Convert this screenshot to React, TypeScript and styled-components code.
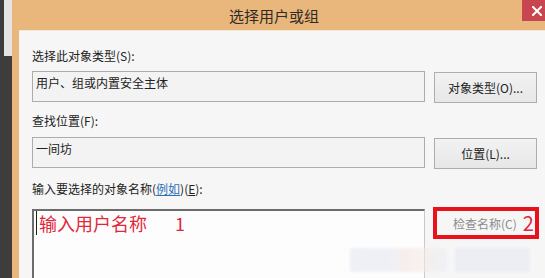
import React from 'react';
import styled, { createGlobalStyle } from 'styled-components';

const GlobalStyle = createGlobalStyle`
  html, body {
    margin: 0;
    padding: 0;
    background: #3d3d3d;
  }
  * {
    box-sizing: border-box;
  }
`;

const FONT = `"Noto Sans CJK SC", "Liberation Sans", sans-serif`;

const Screen = styled.div`
  position: relative;
  width: 545px;
  height: 278px;
  overflow: hidden;
  display: flex;
  font-family: ${FONT};
`;

const Backdrop = styled.div`
  width: 12px;
  flex-shrink: 0;
  background:
    linear-gradient(to right, #3b3b3b 4px, #e4e4e4 4px) top / 100% 56px no-repeat,
    #3d3d3d;
`;

const Window = styled.div`
  flex: 1;
  display: flex;
  flex-direction: column;
  background: #e9b67b;
`;

const TitleBar = styled.div`
  height: 30px;
  display: flex;
  align-items: flex-start;
  flex-shrink: 0;
`;

const Title = styled.div`
  flex: 1;
  text-align: center;
  padding-left: 14px;
  font-size: 15px;
  line-height: 31px;
  color: #2e2a26;
`;

const CloseButton = styled.div`
  width: 25px;
  height: 21px;
  background: #c8464f;
  display: flex;
  align-items: center;
  padding-left: 10px;
`;

const Frame = styled.div`
  flex: 1;
  display: flex;
  padding-left: 7px;
`;

const Panel = styled.div`
  flex: 1;
  display: flex;
  flex-direction: column;
  background: #f6f6f6;
  border-top: 1px solid #f4e6d4;
  padding: 17px 8px 0 13px;
`;

const Label = styled.div<{ $top?: number }>`
  margin-top: ${(p) => p.$top ?? 0}px;
  font-size: 12px;
  line-height: 16px;
  color: #222;
`;

const Link = styled.span`
  color: #2f6fb5;
  text-decoration: underline;
`;

const Row = styled.div<{ $top: number; $side: number; $gap: number }>`
  margin-top: ${(p) => p.$top}px;
  display: grid;
  grid-template-columns: 393px ${(p) => p.$side}px;
  column-gap: ${(p) => p.$gap}px;
  align-items: start;
`;

const Field = styled.div`
  height: 31px;
  border: 1px solid #acacac;
  background: #f3f3f3;
  padding: 3px 3px;
  font-size: 12px;
  line-height: 16px;
  color: #222;
`;

const SideButton = styled.div`
  height: 31px;
  margin-top: 1px;
  border: 1px solid #adadad;
  background: linear-gradient(#f2f2f2, #e7e7e7);
  display: flex;
  align-items: center;
  justify-content: center;
  font-size: 12px;
  color: #222;
`;

const TextArea = styled.div`
  height: 90px;
  border-top: 2px solid #6c6c6c;
  border-left: 2px solid #6c6c6c;
  border-right: 1px solid #c9c9c9;
  background: #fdfdfd;
  padding: 0 2px;
  display: flex;
  align-items: flex-start;
`;

const Caret = styled.span`
  display: inline-block;
  width: 1px;
  height: 24px;
  background: #1e1e1e;
  margin-right: 2px;
`;

const Hint = styled.span<{ $gap?: number }>`
  margin-left: ${(p) => p.$gap ?? 0}px;
  font-size: 18px;
  line-height: 24px;
  color: #e2273a;
`;

const Annotation = styled.div`
  height: 32px;
  margin-top: -2px;
  border: 4px solid #e8121d;
  display: flex;
  align-items: center;
  padding-left: 16px;
  gap: 6px;
`;

const DisabledText = styled.span`
  font-size: 12px;
  color: #8c8c8c;
`;

const Marker = styled.span`
  font-size: 20px;
  line-height: 22px;
  color: #e2273a;
`;

const Ghost = styled.div`
  position: absolute;
  left: 350px;
  top: 248px;
  display: flex;
  gap: 8px;
  filter: blur(1.5px);
  opacity: 0.6;
`;

const GhostBlock = styled.div<{ $w: number; $tint?: boolean }>`
  width: ${(p) => p.$w}px;
  height: 24px;
  background: ${(p) =>
    p.$tint
      ? 'linear-gradient(to right, #e4e8f2 0%, #e6e9f3 40%, #f4e4e2 55%, #f6e9e4 70%, #eceef5 100%)'
      : '#e6e9f2'};
`;

const CloseIcon = () => (
  <svg width="10" height="10" viewBox="0 0 10 10">
    <path d="M1 1 L9 9 M9 1 L1 9" stroke="#fff" strokeWidth="2" strokeLinecap="square" />
  </svg>
);

const App: React.FC = () => {
  return (
    <Screen>
      <GlobalStyle />
      <Backdrop />
      <Window>
        <TitleBar>
          <Title>选择用户或组</Title>
          <CloseButton>
            <CloseIcon />
          </CloseButton>
        </TitleBar>
        <Frame>
          <Panel>
            <Label>选择此对象类型(S):</Label>
            <Row $top={7} $side={103} $gap={9}>
              <Field>用户、组或内置安全主体</Field>
              <SideButton>对象类型(O)...</SideButton>
            </Row>
            <Label $top={10}>查找位置(F):</Label>
            <Row $top={8} $side={103} $gap={9}>
              <Field>一间坊</Field>
              <SideButton>位置(L)...</SideButton>
            </Row>
            <Label $top={12}>
              输入要选择的对象名称(<Link>例如</Link>)(<u>E</u>):
            </Label>
            <Row $top={12} $side={106} $gap={8}>
              <TextArea>
                <Caret />
                <Hint>输入用户名称</Hint>
                <Hint $gap={28}>1</Hint>
              </TextArea>
              <Annotation>
                <DisabledText>检查名称(C)</DisabledText>
                <Marker>2</Marker>
              </Annotation>
            </Row>
          </Panel>
        </Frame>
      </Window>
      <Ghost>
        <GhostBlock $w={97} $tint />
        <GhostBlock $w={75} />
      </Ghost>
    </Screen>
  );
};

export default App;
